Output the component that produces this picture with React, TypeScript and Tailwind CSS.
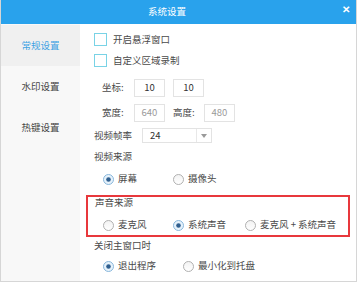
import React from 'react'

const font = { fontFamily: '"Noto Sans CJK SC", "Noto Sans", sans-serif' }

const tabs = ['常规设置', '水印设置', '热键设置']

function Radio({ checked }: { checked?: boolean }) {
  return (
    <svg width="11" height="11" viewBox="0 0 11 11" className="shrink-0">
      <defs>
        <linearGradient id="rg" x1="0" y1="0" x2="0" y2="1">
          <stop offset="0" stopColor="#f2f2f2" />
          <stop offset="1" stopColor="#ffffff" />
        </linearGradient>
      </defs>
      {checked ? (
        <>
          <circle cx="5.5" cy="5.5" r="5" fill="#e6f2fb" stroke="#88b6db" strokeWidth="1" />
          <circle cx="5.5" cy="5.5" r="2.3" fill="#2f5f8f" />
        </>
      ) : (
        <circle cx="5.5" cy="5.5" r="5" fill="url(#rg)" stroke="#b0b0b0" strokeWidth="1" />
      )}
    </svg>
  )
}

function RadioItem({ label, checked, w }: { label: string; checked?: boolean; w: string }) {
  return (
    <div className={`flex items-center gap-[4px] ${w}`}>
      <Radio checked={checked} />
      <span>{label}</span>
    </div>
  )
}

function Field({ value, muted }: { value: string; muted?: boolean }) {
  return (
    <div
      className={`flex h-[18px] w-[31px] items-center justify-center border border-[#e3e3e3] bg-white ${
        muted ? 'text-[#9a9a9a]' : 'text-[#333]'
      }`}
    >
      {value}
    </div>
  )
}

export default function App() {
  return (
    <div className="h-[282px] w-[360px] bg-white text-[9.5px] leading-none text-[#4a4a4a]" style={font}>
      <div className="flex h-[282px] w-[357px] flex-col border-b border-r border-l border-[#d6d6d6]">
        {/* Title bar */}
        <div className="relative flex h-[24px] shrink-0 items-center bg-[#29a2ec] pl-[147px] text-white">
          系统设置
          <span className="absolute right-[6px] top-[4px] text-[10px] font-bold">✕</span>
        </div>

        <div className="flex flex-1">
          {/* Sidebar */}
          <div className="w-[79px] shrink-0 bg-[#f8f8f8]">
            {tabs.map((t, i) => (
              <div
                key={t}
                className={`flex h-[41px] items-center justify-center ${
                  i === 0 ? 'mt-px bg-[#f0f0f0] text-[#3ea2e3]' : 'text-[#444]'
                }`}
              >
                {t}
              </div>
            ))}
          </div>

          {/* Content */}
          <div className="flex flex-1 flex-col pl-[14px]">
            <div className="mt-[5px] flex h-[21px] items-center gap-[6px]">
              <div className="h-[13px] w-[13px] border border-[#79d3e6] bg-white" />
              <span>开启悬浮窗口</span>
            </div>
            <div className="flex h-[21px] items-center gap-[6px]">
              <div className="h-[13px] w-[13px] border border-[#79d3e6] bg-white" />
              <span>自定义区域录制</span>
            </div>

            <div className="mt-[8px] flex h-[18px] items-center">
              <span className="ml-[8px] w-[32px]">坐标:</span>
              <Field value="10" />
              <div className="w-[8px]" />
              <Field value="10" />
            </div>
            <div className="mt-[7px] flex h-[18px] items-center">
              <span className="ml-[8px] w-[32px]">宽度:</span>
              <Field value="640" muted />
              <span className="w-[39px] pl-[8px]">高度:</span>
              <Field value="480" muted />
            </div>

            <div className="mt-[6px] flex h-[15px] items-center">
              <span className="w-[48px]">视频帧率</span>
              <div className="flex h-[15px] w-[70px] border border-[#e3e3e3] bg-white">
                <span className="flex flex-1 items-center pl-[7px] text-[#333]">24</span>
                <div className="flex w-[15px] items-center justify-center border-l border-[#e8e8e8]">
                  <svg width="6" height="4" viewBox="0 0 6 4">
                    <path d="M0 0 L6 0 L3 4 Z" fill="#9a9a9a" />
                  </svg>
                </div>
              </div>
            </div>

            <div className="mt-[5px] flex h-[18px] items-center">视频来源</div>
            <div className="mt-[4px] flex h-[18px] items-center pl-[9px]">
              <RadioItem label="屏幕" checked w="w-[70px]" />
              <RadioItem label="摄像头" w="w-[70px]" />
            </div>

            <div className="ml-[-8px] mt-[7px] w-[264px] border-2 border-[#e8383c] pl-[7px] pb-[4px]">
              <div className="flex h-[12px] items-center">声音来源</div>
              <div className="mt-[10px] flex h-[12px] items-center pl-[8px]">
                <RadioItem label="麦克风" w="w-[70px]" />
                <RadioItem label="系统声音" checked w="w-[72px]" />
                <RadioItem label="麦克风 + 系统声音" w="w-auto" />
              </div>
            </div>

            <div className="flex h-[18px] items-center">关闭主窗口时</div>
            <div className="mt-[2px] flex h-[18px] items-center pl-[9px]">
              <RadioItem label="退出程序" checked w="w-[80px]" />
              <RadioItem label="最小化到托盘" w="w-auto" />
            </div>
          </div>
        </div>
      </div>
    </div>
  )
}
